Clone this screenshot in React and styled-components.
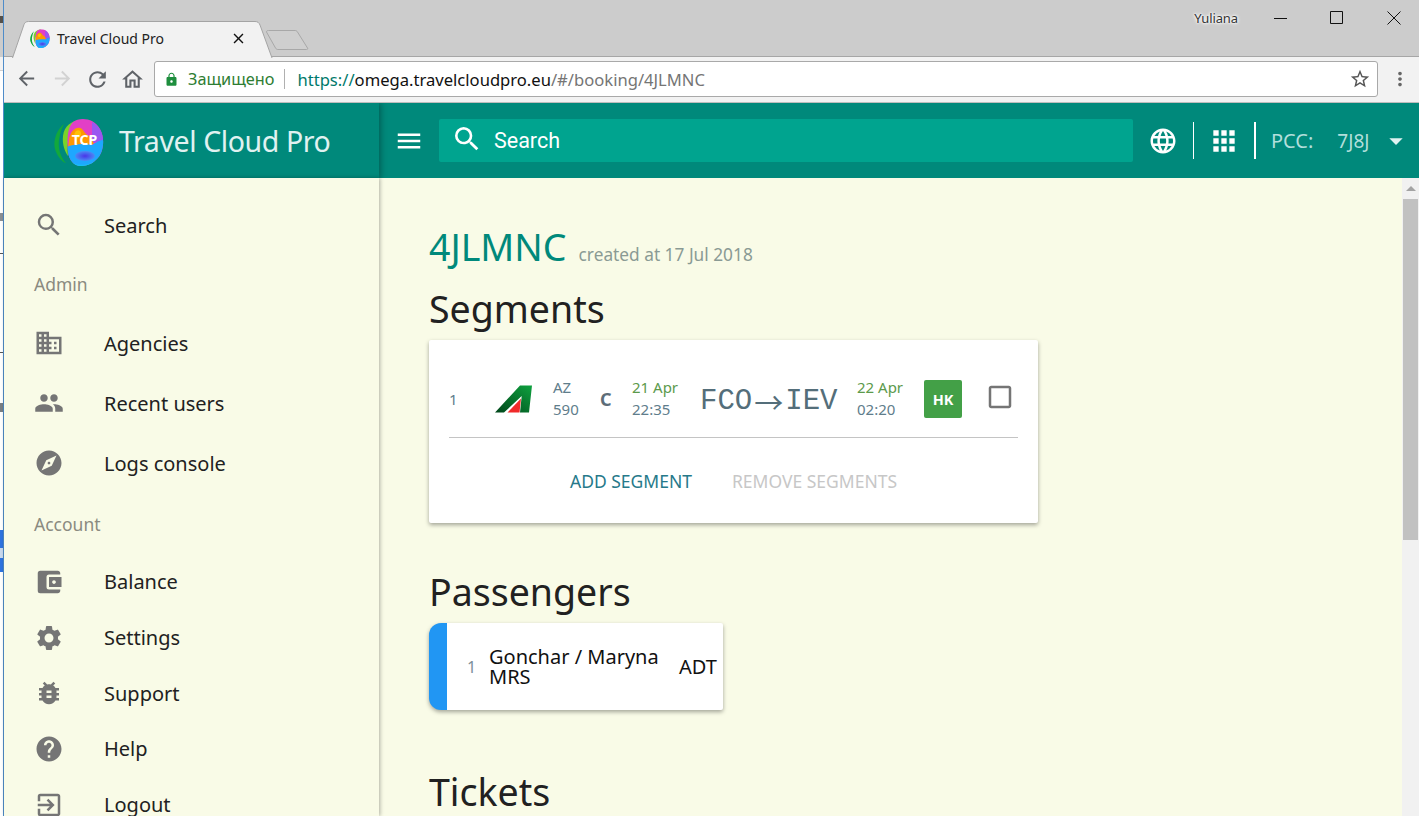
import React from "react";
import styled, { createGlobalStyle } from "styled-components";
import {
  MdSearch,
  MdBusiness,
  MdPeople,
  MdExplore,
  MdAccountBalanceWallet,
  MdSettings,
  MdBugReport,
  MdHelp,
  MdExitToApp,
  MdMenu,
  MdLanguage,
  MdApps,
  MdArrowDropDown,
  MdCheckBoxOutlineBlank,
  MdArrowBack,
  MdArrowForward,
  MdRefresh,
  MdOutlineHome,
  MdLock,
  MdStarBorder,
  MdMoreVert,
  MdClose,
} from "react-icons/md";

const SANS = `"Noto Sans", "Open Sans", sans-serif`;

const NAV_ADMIN = [
  { label: "Agencies", icon: MdBusiness },
  { label: "Recent users", icon: MdPeople },
  { label: "Logs console", icon: MdExplore },
];

const NAV_ACCOUNT = [
  { label: "Balance", icon: MdAccountBalanceWallet },
  { label: "Settings", icon: MdSettings },
  { label: "Support", icon: MdBugReport },
  { label: "Help", icon: MdHelp },
  { label: "Logout", icon: MdExitToApp },
];

// what shows of the desktop behind the browser window, top to bottom
const DESKTOP_SLIVER = [
  { height: 16, color: "#cccccc" },
  { height: 7, color: "#55504a" },
  { height: 34, color: "#cccccc" },
  { height: 13, color: "#f2f2f2" },
  { height: 1, color: "#cfcfcf" },
  { height: 142, color: "#ffffff" },
  { height: 8, color: "#8a8f94" },
  { height: 32, color: "#ffffff" },
  { height: 1, color: "#555555" },
  { height: 98, color: "#ffffff" },
  { height: 1, color: "#555555" },
  { height: 50, color: "#ffffff" },
  { height: 9, color: "#7a7f84" },
  { height: 118, color: "#ffffff" },
  { height: 18, color: "#2f74e0" },
  { height: 10, color: "#c9d9ee" },
  { height: 14, color: "#2f74e0" },
  { height: 244, color: "#ffffff" },
];

const LogoMark = ({ size, showText }) => (
  <svg width={size} height={size} viewBox="0 0 50 50">
    <defs>
      <clipPath id="logoBall">
        <path d="M19 6C26 1 40 2 46 13c4 7 4 17 1 24-4 9-13 13-20 13-7 0-12-6-13-14C13 25 13 12 19 6z" />
      </clipPath>
      <radialGradient id="logoCore">
        <stop offset="0" stopColor="#4a35e8" />
        <stop offset="1" stopColor="#4a8cf5" />
      </radialGradient>
    </defs>
    <path d="M10 8C2 14-1 26 1 33c2 7 7 13 11 14C6 40 4 32 5 24c1-7 3-12 5-16z" fill="#12a83c" />
    <path d="M28 4C18 4 10 10 9 20c-1 8 2 16 5 20-1-10 0-20 4-27 2-4 6-7 10-9z" fill="#7ad32a" />
    <g clipPath="url(#logoBall)">
      <rect width="50" height="50" fill="#e23fc6" />
      <path d="M38 6c6 3 12 10 12 20H38z" fill="#9a56f0" />
      <path d="M15 24c1-8 6-13 11-12 4 1 4 6 9 8 4 2 3 5 5 8l-26 5z" fill="#ff9800" />
      <path d="M22 15c3-2 5 0 5 3s-4 6-6 4 0-6 1-7z" fill="#ffc107" />
      <path d="M12 31c8-3 18-4 26-2 4-3 8-5 12-5v28H12z" fill="#1ea7ff" />
      <ellipse cx="31" cy="40" rx="10" ry="5" fill="url(#logoCore)" />
      <path d="M15 43c5 8 22 8 31-2v10H15z" fill="#12c4f5" />
    </g>
    {showText && (
      <LogoText x="30.5" y="29" textAnchor="middle">
        TCP
      </LogoText>
    )}
  </svg>
);

const TailLogo = () => (
  <svg width="38" height="28" viewBox="0 0 38 28">
    <defs>
      <linearGradient id="tailGreen" x1="0" y1="1" x2="1" y2="0">
        <stop offset="0" stopColor="#00451a" />
        <stop offset="1" stopColor="#0ea23f" />
      </linearGradient>
    </defs>
    <path d="M0 27.5L25 .5h12l-3 27h-9L26.7 11 9 27.5z" fill="url(#tailGreen)" />
    <path d="M12.5 27.5L26 13.5l-1.5 14z" fill="#f02a2a" />
  </svg>
);

const App = () => (
  <Page>
    <GlobalStyle />
    <DesktopEdge>
      {DESKTOP_SLIVER.map((block, i) => (
        <EdgeBlock key={i} $height={block.height} $color={block.color} />
      ))}
    </DesktopEdge>
    <Browser>
      <TitleBar>
        <Tab>
          <TabShape width="268" height="37" viewBox="0 0 268 37">
            <path d="M0.5 37L12 3.5C12.8 1.5 14 .5 16.5 .5H243c2.5 0 4 1 5 3.5L260 37" fill="#f2f2f2" stroke="#a4a4a4" />
          </TabShape>
          <TabContent>
            <LogoMark size={20} />
            <TabTitle>Travel Cloud Pro</TabTitle>
            <TabClose>
              <MdClose size={17} />
            </TabClose>
          </TabContent>
        </Tab>
        <NewTab width="44" height="22" viewBox="0 0 44 22">
          <path d="M1.5 3C1.5 2 2 1.5 3.5 1.5H30c1 0 2 .5 2.5 1.5L42.5 19c.5 1 0 1.5-1 1.5H13c-1 0-2-.5-2.5-1.5z" fill="#cfcfcf" stroke="#a8a8a8" />
        </NewTab>
        <UserName>Yuliana</UserName>
        <WindowControls>
          <svg width="14" height="14" viewBox="0 0 14 14">
            <path d="M1 7.5h13" stroke="#111" fill="none" />
          </svg>
          <svg width="14" height="14" viewBox="0 0 14 14">
            <path d="M.5.5h12v12H.5z" stroke="#111" fill="none" />
          </svg>
          <svg width="14" height="14" viewBox="0 0 14 14">
            <path d="M.5.5l13 13M13.5.5l-13 13" stroke="#111" fill="none" />
          </svg>
        </WindowControls>
      </TitleBar>

      <ToolBar>
        <NavButtons>
          <NavIcon>
            <MdArrowBack size={23} />
          </NavIcon>
          <NavIcon $muted>
            <MdArrowForward size={23} />
          </NavIcon>
          <NavIcon>
            <MdRefresh size={25} />
          </NavIcon>
          <NavIcon>
            <MdOutlineHome size={25} />
          </NavIcon>
        </NavButtons>
        <Omnibox>
          <LockIcon>
            <MdLock size={15} />
          </LockIcon>
          <SecureLabel>Защищено</SecureLabel>
          <OmniDivider />
          <Url>
            <UrlScheme>https://</UrlScheme>
            <UrlHost>omega.travelcloudpro.eu</UrlHost>
            <UrlPath>/#/booking/4JLMNC</UrlPath>
          </Url>
          <StarIcon>
            <MdStarBorder size={22} />
          </StarIcon>
        </Omnibox>
        <MenuIcon>
          <MdMoreVert size={22} />
        </MenuIcon>
      </ToolBar>

      <AppHeader>
        <Brand>
          <LogoMark size={50} showText />
          <BrandName>Travel Cloud Pro</BrandName>
        </Brand>
        <HeaderBar>
          <HamburgerButton>
            <MdMenu size={30} />
          </HamburgerButton>
          <SearchBox>
            <SearchGlyph>
              <MdSearch size={32} />
            </SearchGlyph>
            <SearchLabel>Search</SearchLabel>
          </SearchBox>
          <HeaderIcon>
            <MdLanguage size={30} />
          </HeaderIcon>
          <HeaderDivider />
          <HeaderIcon>
            <MdApps size={32} />
          </HeaderIcon>
          <HeaderDivider $thick />
          <PccLabel>PCC:</PccLabel>
          <PccValue>7J8J</PccValue>
          <PccCaret>
            <MdArrowDropDown size={32} />
          </PccCaret>
        </HeaderBar>
      </AppHeader>

      <Body>
        <Sidebar>
          <NavItem $height={60}>
            <NavGlyph>
              <MdSearch size={30} />
            </NavGlyph>
            <NavLabel>Search</NavLabel>
          </NavItem>
          <NavSection $height={58}>Admin</NavSection>
          {NAV_ADMIN.map(({ label, icon: Icon }) => (
            <NavItem key={label} $height={60}>
              <NavGlyph>
                <Icon size={30} />
              </NavGlyph>
              <NavLabel>{label}</NavLabel>
            </NavItem>
          ))}
          <NavSection $height={61}>Account</NavSection>
          {NAV_ACCOUNT.map(({ label, icon: Icon }) => (
            <NavItem key={label} $height={55.7}>
              <NavGlyph>
                <Icon size={30} />
              </NavGlyph>
              <NavLabel>{label}</NavLabel>
            </NavItem>
          ))}
        </Sidebar>

        <Main>
          <BookingTitle>
            <BookingCode>4JLMNC</BookingCode>
            <BookingDate>created at 17 Jul 2018</BookingDate>
          </BookingTitle>

          <SectionTitle>Segments</SectionTitle>
          <SegmentCard>
            <SegmentRow>
              <SegmentIndex>1</SegmentIndex>
              <TailWrap>
                <TailLogo />
              </TailWrap>
              <Stacked $width={52}>
                <span>AZ</span>
                <span>590</span>
              </Stacked>
              <BookingClass>C</BookingClass>
              <Stacked $width={68}>
                <DateText>21 Apr</DateText>
                <span>22:35</span>
              </Stacked>
              <Route>
                FCO<RouteArrow>→</RouteArrow>IEV
              </Route>
              <Stacked $width={67}>
                <DateText>22 Apr</DateText>
                <span>02:20</span>
              </Stacked>
              <StatusBadge>HK</StatusBadge>
              <SegmentCheck>
                <MdCheckBoxOutlineBlank size={30} />
              </SegmentCheck>
            </SegmentRow>
            <CardActions>
              <ActionButton>ADD SEGMENT</ActionButton>
              <ActionButton $disabled>REMOVE SEGMENTS</ActionButton>
            </CardActions>
          </SegmentCard>

          <PassengersTitle>Passengers</PassengersTitle>
          <PassengerCard>
            <PassengerIndex>1</PassengerIndex>
            <PassengerName>
              Gonchar / Maryna
              <br />
              MRS
            </PassengerName>
            <PassengerType>ADT</PassengerType>
          </PassengerCard>

          <TicketsTitle>Tickets</TicketsTitle>
        </Main>

        <ScrollBar>
          <ScrollArrow />
          <ScrollThumb />
        </ScrollBar>
      </Body>
    </Browser>
  </Page>
);

export default App;

const GlobalStyle = createGlobalStyle`
  html, body {
    margin: 0;
    padding: 0;
    height: 100%;
    overflow: hidden;
    background: #fff;
  }
  #root {
    height: 100%;
  }
`;

const Page = styled.div`
  display: flex;
  width: 1419px;
  height: 816px;
  overflow: hidden;
  font-family: ${SANS};
`;

const DesktopEdge = styled.div`
  flex: 0 0 4px;
  box-sizing: border-box;
  display: flex;
  flex-direction: column;
  border-right: 1px solid #4f8cc9;
`;

const EdgeBlock = styled.span`
  flex: 0 0 ${(p) => p.$height}px;
  background: ${(p) => p.$color};
`;

const Browser = styled.div`
  flex: 1;
  min-width: 0;
  display: flex;
  flex-direction: column;
`;

const TitleBar = styled.div`
  flex: 0 0 57px;
  box-sizing: border-box;
  display: flex;
  align-items: flex-end;
  padding-left: 8px;
  background: #cccccc;
  border-bottom: 1px solid #a6a6a6;
`;

const Tab = styled.div`
  position: relative;
  width: 254px;
  height: 36px;
  margin-bottom: -1px;
`;

const TabShape = styled.svg`
  position: absolute;
  left: 0;
  top: 0;
`;

const TabContent = styled.div`
  position: relative;
  display: flex;
  align-items: center;
  height: 34px;
  padding-left: 18px;
`;

const TabTitle = styled.span`
  margin-left: 7px;
  width: 173px;
  font-size: 14px;
  color: #222;
`;

const TabClose = styled.span`
  display: flex;
  color: #111;
`;

const NewTab = styled.svg`
  margin-left: -1px;
  margin-bottom: 5px;
`;

const UserName = styled.span`
  margin-left: auto;
  align-self: flex-start;
  margin-top: 9px;
  font-size: 13px;
  letter-spacing: -0.1px;
  color: #333;
  text-shadow: 0 0 2px #fff, 0 0 3px #fff, 0 0 4px #fff;
`;

const WindowControls = styled.div`
  align-self: flex-start;
  display: flex;
  gap: 43px;
  margin: 11px 18px 0 35px;
`;

const ToolBar = styled.div`
  flex: 0 0 46px;
  box-sizing: border-box;
  display: flex;
  align-items: center;
  background: #f2f2f2;
  border-bottom: 1px solid #bdbdbd;
  padding-bottom: 1px;
`;

const NavButtons = styled.div`
  display: flex;
  width: 150px;
  padding-left: 5px;
  box-sizing: border-box;
`;

const NavIcon = styled.span`
  flex: 0 0 35.4px;
  display: flex;
  justify-content: center;
  color: ${(p) => (p.$muted ? "#d2d2d2" : "#5f6368")};
`;

const Omnibox = styled.div`
  width: 1224px;
  height: 36px;
  box-sizing: border-box;
  display: flex;
  align-items: center;
  background: #fff;
  border: 1px solid #a9a9a9;
  border-radius: 3px;
`;

const LockIcon = styled.span`
  display: flex;
  margin-left: 9px;
  color: #1e8e3e;
`;

const SecureLabel = styled.span`
  margin-left: 9px;
  font-size: 16.3px;
  color: #2e7d32;
`;

const OmniDivider = styled.span`
  width: 1px;
  height: 20px;
  margin: 0 12px 0 10px;
  background: #b0b0b0;
`;

const Url = styled.span`
  font-size: 16.6px;
  margin-top: 1px;
`;

const UrlScheme = styled.span`
  color: #00796b;
`;

const UrlHost = styled.span`
  color: #111;
`;

const UrlPath = styled.span`
  color: #757575;
`;

const StarIcon = styled.span`
  display: flex;
  margin-left: auto;
  margin-right: 6px;
  color: #555;
`;

const MenuIcon = styled.span`
  display: flex;
  margin-left: 11px;
  color: #666;
`;

const AppHeader = styled.header`
  flex: 0 0 75px;
  display: flex;
  background: #00897b;
  color: #fff;
`;

const Brand = styled.div`
  position: relative;
  z-index: 2;
  width: 375px;
  box-sizing: border-box;
  display: flex;
  align-items: center;
  padding-left: 50px;
  box-shadow: 2px 0 6px rgba(0, 0, 0, 0.3);
  clip-path: inset(0 -10px 0 0);
`;

const LogoText = styled.text`
  font-family: ${SANS};
  font-size: 14px;
  font-weight: 700;
  fill: #fff;
`;

const BrandName = styled.span`
  margin-left: 15px;
  font-size: 28.5px;
  letter-spacing: -0.4px;
  color: #e0f2f1;
`;

const HeaderBar = styled.div`
  flex: 1;
  display: flex;
  align-items: center;
`;

const HamburgerButton = styled.span`
  display: flex;
  margin-left: 15px;
  color: #fff;
`;

const SearchBox = styled.div`
  display: flex;
  align-items: center;
  width: 694px;
  height: 43px;
  box-sizing: border-box;
  margin-left: 15px;
  padding-left: 12px;
  border-radius: 2px;
  background: #00a48f;
  color: #fff;
`;

const SearchGlyph = styled.span`
  display: flex;
  margin-bottom: 4px;
`;

const SearchLabel = styled.span`
  margin-left: 11px;
  font-family: Roboto, sans-serif;
  font-size: 21.5px;
`;

const HeaderIcon = styled.span`
  display: flex;
  justify-content: center;
  width: 60px;
  color: #fff;
`;

const HeaderDivider = styled.span`
  width: ${(p) => (p.$thick ? 2 : 1)}px;
  height: 37px;
  background: #fff;
`;

const PccLabel = styled.span`
  margin-left: 15px;
  font-size: 20px;
  color: #b2dfdb;
`;

const PccValue = styled.span`
  margin-left: 24px;
  font-size: 19px;
  color: #b2dfdb;
`;

const PccCaret = styled.span`
  display: flex;
  margin-left: 11px;
  color: #e0f2f1;
`;

const Body = styled.div`
  flex: 1;
  min-height: 0;
  display: flex;
  background: #f9fbe7;
`;

const Sidebar = styled.nav`
  flex: 0 0 375px;
  box-sizing: border-box;
  padding-top: 17px;
  overflow: hidden;
  box-shadow: 1px 0 4px rgba(0, 0, 0, 0.3);
`;

const NavItem = styled.div`
  display: flex;
  align-items: center;
  height: ${(p) => p.$height}px;
  padding-left: 30px;
`;

const NavGlyph = styled.span`
  display: flex;
  width: 70px;
  color: #757575;
`;

const NavLabel = styled.span`
  font-size: 20px;
  color: #212121;
`;

const NavSection = styled.div`
  display: flex;
  align-items: center;
  height: ${(p) => p.$height}px;
  padding-left: 30px;
  font-size: 17.5px;
  color: #8a8a80;
`;

const Main = styled.main`
  flex: 1;
  min-width: 0;
  box-sizing: border-box;
  padding: 43px 0 0 50px;
  overflow: hidden;
`;

const BookingTitle = styled.div`
  display: flex;
  align-items: baseline;
  height: 48px;
`;

const BookingCode = styled.span`
  font-size: 37.5px;
  color: #00897b;
`;

const BookingDate = styled.span`
  margin-left: 12px;
  font-size: 17.3px;
  color: #8a9a94;
`;

const SectionTitle = styled.h2`
  margin: 16px 0 0;
  font-size: 37.5px;
  line-height: 48px;
  font-weight: 400;
  color: #212121;
`;

const PassengersTitle = styled(SectionTitle)`
  margin-top: 45px;
`;

const TicketsTitle = styled(SectionTitle)`
  margin-top: 58px;
`;

const SegmentCard = styled.section`
  width: 609px;
  height: 183px;
  box-sizing: border-box;
  margin-top: 7px;
  padding: 0 20px;
  background: #fff;
  border-radius: 2px;
  box-shadow: 0 2px 4px rgba(0, 0, 0, 0.35);
`;

const SegmentRow = styled.div`
  display: flex;
  align-items: center;
  height: 98px;
  padding-top: 20px;
  box-sizing: border-box;
  border-bottom: 1px solid #c4c4c4;
  font-size: 15px;
  color: #607d8b;
`;

const SegmentIndex = styled.span`
  width: 46px;
`;

const TailWrap = styled.span`
  display: flex;
  width: 58px;
`;

const Stacked = styled.span`
  display: flex;
  flex-direction: column;
  gap: 3px;
  width: ${(p) => p.$width}px;
  line-height: 19px;
`;

const BookingClass = styled.span`
  width: 32px;
  margin-left: -5px;
  font-size: 18px;
  font-weight: 700;
  color: #5d6d78;
`;

const DateText = styled.span`
  color: #5c9a4c;
`;

const Route = styled.span`
  display: flex;
  align-items: center;
  width: 157px;
  margin-top: 5px;
  font-family: "Liberation Mono", monospace;
  font-size: 29px;
  color: #546e7a;
`;

const RouteArrow = styled.span`
  margin: 0 2px;
  font-family: "Noto Sans CJK SC", sans-serif;
  font-size: 29px;
  line-height: 1;
`;

const StatusBadge = styled.span`
  display: flex;
  align-items: center;
  justify-content: center;
  width: 38px;
  height: 38px;
  border-radius: 2px;
  background: #43a047;
  color: #fff;
  font-size: 14.5px;
  font-weight: 700;
`;

const SegmentCheck = styled.span`
  display: flex;
  margin-left: 23px;
  margin-bottom: 4px;
  color: #757575;
`;

const CardActions = styled.div`
  display: flex;
  justify-content: center;
  align-items: center;
  gap: 40px;
  height: 85px;
`;

const ActionButton = styled.span`
  font-size: 17.5px;
  color: ${(p) => (p.$disabled ? "#c7c7c7" : "#26798a")};
`;

const PassengerCard = styled.section`
  display: flex;
  align-items: center;
  width: 294px;
  height: 87px;
  box-sizing: border-box;
  margin-top: 7px;
  background: #fff;
  border-left: 18px solid #2196f3;
  border-radius: 12px 2px 2px 12px;
  box-shadow: 0 2px 4px rgba(0, 0, 0, 0.35);
`;

const PassengerIndex = styled.span`
  width: 22px;
  margin-left: 20px;
  font-size: 16px;
  color: #7c8f9a;
`;

const PassengerName = styled.span`
  width: 190px;
  font-size: 20px;
  line-height: 20px;
  color: #111;
`;

const PassengerType = styled.span`
  font-size: 20px;
  color: #111;
`;

const ScrollBar = styled.div`
  flex: 0 0 17px;
  display: flex;
  flex-direction: column;
  align-items: center;
  background: #f1f1f1;
`;

const ScrollArrow = styled.span`
  margin-top: 8px;
  width: 0;
  height: 0;
  border-left: 5px solid transparent;
  border-right: 5px solid transparent;
  border-bottom: 5px solid #a3a3a3;
`;

const ScrollThumb = styled.span`
  width: 15px;
  height: 341px;
  margin-top: 8px;
  background: #c1c1c1;
`;
